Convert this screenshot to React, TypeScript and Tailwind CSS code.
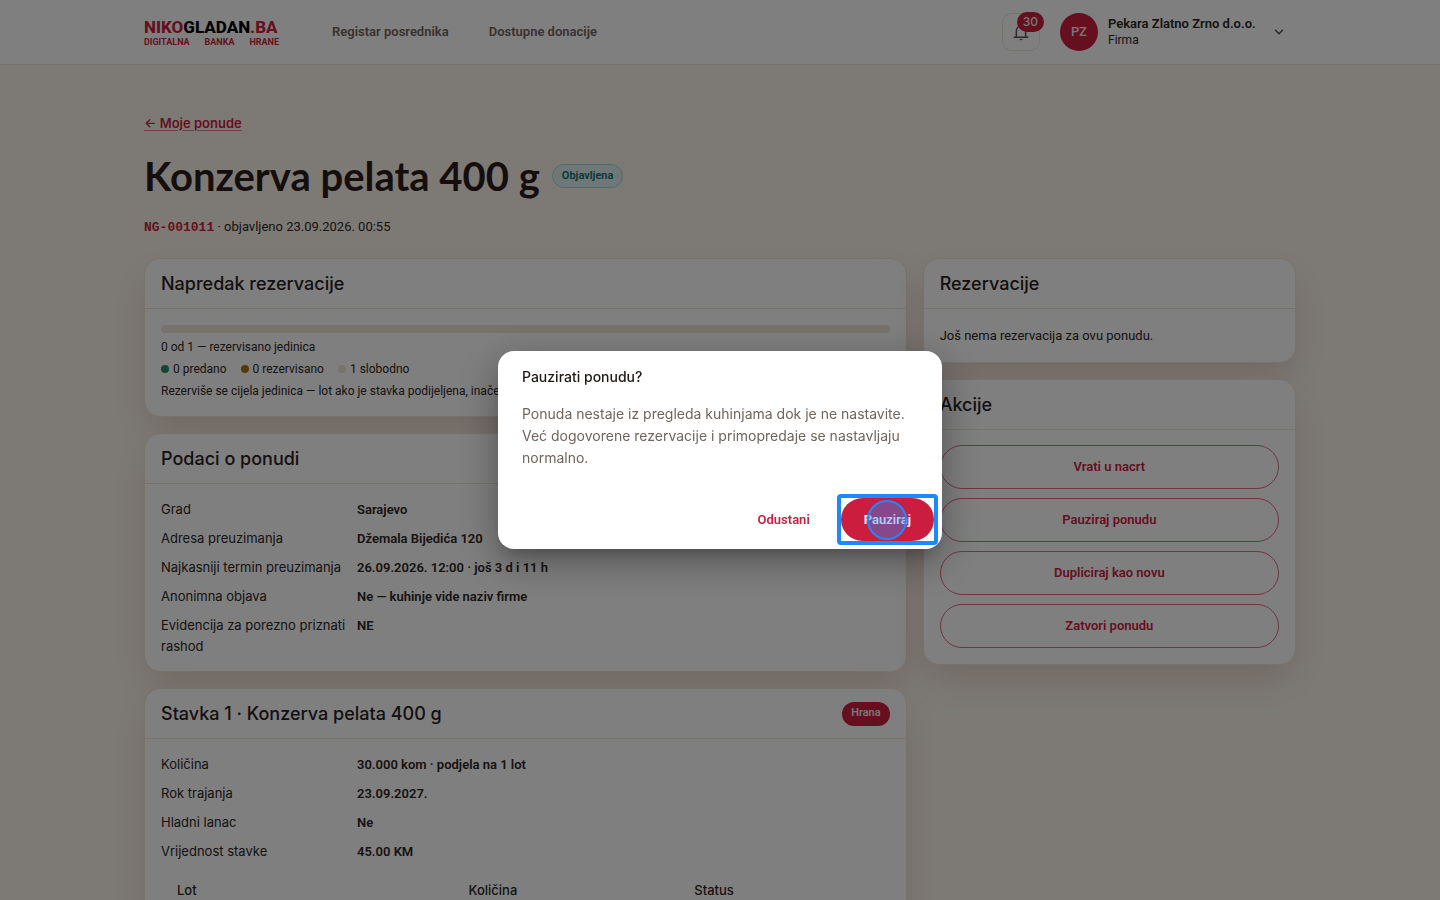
import type { ReactNode } from "react";
import { ChevronDown } from "lucide-react";

const SHADOW = "shadow-[0_16px_36px_-4px_rgba(140,70,50,0.22)]";

function Logo() {
  return (
    <a href="#" aria-label="Nikogladan.ba" className="flex w-[135px] flex-col font-[Roboto,sans-serif]">
      <span className="text-[17px] leading-[20px] font-extrabold text-black">
        <span className="text-[#cb1e3e]">NIKO</span>GLADAN<span className="text-[#cb1e3e]">.BA</span>
      </span>
      <span className="flex justify-between text-[9px] leading-[10px] font-bold text-[#cb1e3e]">
        <span>DIGITALNA</span>
        <span>BANKA</span>
        <span>HRANE</span>
      </span>
    </a>
  );
}

function BellIcon() {
  return (
    <svg width="18" height="18" viewBox="0 0 24 24" fill="none" stroke="currentColor" strokeWidth="2" className="text-[#5c524c]" aria-hidden="true">
      <path d="M3 19h18" strokeLinecap="round" />
      <path d="M5.8 19v-8.5a6.2 6.2 0 0 1 12.4 0V19" />
      <path d="M12 4V2.5" strokeLinecap="round" />
      <path d="M9.5 21.4h5l-2.5 2z" fill="currentColor" stroke="none" />
    </svg>
  );
}

function Card({ title, badge, children }: { title: string; badge?: ReactNode; children: ReactNode }) {
  return (
    <section className={`rounded-[16px] border border-[#efe4d6] bg-white ${SHADOW}`}>
      <header className="flex h-[50px] items-center justify-between border-b border-[#efe4d6] px-4">
        <h2 className="text-[18px] leading-6 font-medium text-[#2a211d]">{title}</h2>
        {badge}
      </header>
      <div className="px-4 pt-[15px] pb-[14px]">{children}</div>
    </section>
  );
}

function Details({ rows }: { rows: [string, string][] }) {
  return (
    <dl className="grid grid-cols-[192px_1fr] gap-x-1 gap-y-2 text-[13px] leading-[21px]">
      {rows.map(([label, value]) => (
        <div key={label} className="contents">
          <dt>{label}</dt>
          <dd className="font-[Roboto,sans-serif] font-semibold">{value}</dd>
        </div>
      ))}
    </dl>
  );
}

const legend = [
  { color: "bg-[#2a8a68]", label: "0 predano" },
  { color: "bg-[#a87400]", label: "0 rezervisano" },
  { color: "bg-[#efe4d6]", label: "1 slobodno" },
];

const actions = ["Vrati u nacrt", "Pauziraj ponudu", "Dupliciraj kao novu", "Zatvori ponudu"];

export default function App() {
  return (
    <div className="h-screen overflow-hidden bg-[#faf5ec] font-[Inter,'Liberation_Sans',sans-serif] text-[#2e2622]">
      <header className="border-b border-[#efe4d6] bg-white">
        <div className="mx-auto flex h-16 max-w-6xl items-center">
          <Logo />
          <nav className="ml-[53px] flex gap-10 font-[Roboto,sans-serif] text-[13px] font-semibold text-[#6f655e]">
            <a href="#">Registar posrednika</a>
            <a href="#">Dostupne donacije</a>
          </nav>
          <div className="ml-auto flex items-center pr-[10px]">
            <button type="button" aria-label="Obavijesti" className="relative flex size-[38px] items-center justify-center rounded-[10px] border border-[#efe4d6]">
              <BellIcon />
              <span className="absolute -top-[2px] -right-[5px] flex h-5 items-center rounded-full bg-[#cb1e3e] px-[6px] text-[12px] font-medium text-[#eee]">
                30
              </span>
            </button>
            <button type="button" className="ml-5 flex items-center text-left font-[Roboto,sans-serif]">
              <span className="flex size-[38px] items-center justify-center rounded-full bg-[#cb1e3e] text-[13px] font-medium text-[#eee]">PZ</span>
              <span className="ml-[10px] w-[152px] leading-4 whitespace-nowrap">
                <span className="block text-[13px] font-semibold">Pekara Zlatno Zrno d.o.o.</span>
                <span className="block text-[12px]">Firma</span>
              </span>
              <ChevronDown className="ml-3 size-[14px] text-[#5c524c]" strokeWidth={2.6} />
            </button>
          </div>
        </div>
      </header>

      <main className="mx-auto max-w-6xl pt-[50px]">
        <a href="#" className="block w-fit text-[13px] leading-4 font-semibold text-[#cb1e3e] underline decoration-[#e08093] decoration-1 underline-offset-2">
          ← Moje ponude
        </a>
        <div className="mt-[21px] flex items-center gap-3">
          <h1 className="font-[Lato,sans-serif] text-[40px] leading-[48px] font-bold text-[#2a1d18]">Konzerva pelata 400 g</h1>
          <span className="flex h-6 items-center rounded-full border border-[#a9d5d3] bg-[#dff0f0] px-[9px] font-[Roboto,sans-serif] text-[11px] font-semibold text-[#0e6f6d]">
            Objavljena
          </span>
        </div>
        <p className="mt-4 font-[Roboto,sans-serif] text-[13px] leading-[21px]">
          <span className="font-['Liberation_Mono',monospace] font-bold text-[#cb1e3e]">NG-001011</span> · objavljeno 23.09.2026. 00:55
        </p>

        <div className="mt-5 grid grid-cols-12 items-start gap-4">
          <div className="col-span-8 flex flex-col gap-4">
            <Card title="Napredak rezervacije">
              <div className="mt-px mb-[3px] h-2 rounded-full bg-[#efe4d6]" />
              <div className="font-[Roboto,sans-serif] text-[12px] leading-[22px]">
                <p>0 od 1 — rezervisano jedinica</p>
                <ul className="flex gap-[14px]">
                  {legend.map((item) => (
                    <li key={item.label} className="flex items-center gap-1">
                      <span className={`size-2 rounded-full ${item.color}`} />
                      {item.label}
                    </li>
                  ))}
                </ul>
                <p>Rezerviše se cijela jedinica — lot ako je stavka podijeljena, inače cijela stavka.</p>
              </div>
            </Card>

            <Card title="Podaci o ponudi">
              <Details
                rows={[
                  ["Grad", "Sarajevo"],
                  ["Adresa preuzimanja", "Džemala Bijedića 120"],
                  ["Najkasniji termin preuzimanja", "26.09.2026. 12:00 · još 3 d i 11 h"],
                  ["Anonimna objava", "Ne — kuhinje vide naziv firme"],
                  ["Evidencija za porezno priznati rashod", "NE"],
                ]}
              />
            </Card>

            <Card
              title="Stavka 1 · Konzerva pelata 400 g"
              badge={
                <span className="flex h-6 items-center rounded-full bg-[#cb1e3e] px-[9px] font-[Roboto,sans-serif] text-[11px] font-semibold text-[#eee]">
                  Hrana
                </span>
              }
            >
              <Details
                rows={[
                  ["Količina", "30.000 kom · podjela na 1 lot"],
                  ["Rok trajanja", "23.09.2027."],
                  ["Hladni lanac", "Ne"],
                  ["Vrijednost stavke", "45.00 KM"],
                ]}
              />
              <table className="mt-[18px] w-full table-fixed text-left text-[13px] leading-5">
                <thead>
                  <tr>
                    <th className="w-[40%] px-4 pb-3 font-medium">Lot</th>
                    <th className="w-[31%] px-4 pb-3 font-medium">Količina</th>
                    <th className="px-4 pb-3 font-medium">Status</th>
                  </tr>
                </thead>
              </table>
            </Card>
          </div>

          <div className="col-span-4 flex flex-col gap-4">
            <Card title="Rezervacije">
              <p className="font-[Roboto,sans-serif] text-[13px] leading-6">Još nema rezervacija za ovu ponudu.</p>
            </Card>
            <Card title="Akcije">
              <div className="flex flex-col gap-[9px] pb-[2px]">
                {actions.map((label) => (
                  <button
                    key={label}
                    type="button"
                    className="h-11 rounded-full border border-[#e06a80] font-[Roboto,sans-serif] text-[13px] font-semibold text-[#cb1e3e]"
                  >
                    {label}
                  </button>
                ))}
              </div>
            </Card>
          </div>
        </div>
      </main>

      <div className="fixed inset-0 flex items-center justify-center bg-black/50">
        <div
          role="dialog"
          aria-modal="true"
          aria-labelledby="pause-title"
          className="w-full max-w-[444px] rounded-[16px] bg-white shadow-[0_11px_15px_-7px_rgba(0,0,0,0.2),0_12px_38px_3px_rgba(0,0,0,0.3)]"
        >
          <div className="px-6 pt-4">
            <h2 id="pause-title" className="text-[14px] leading-5 font-medium text-[#1f1815]">
              Pauzirati ponudu?
            </h2>
            <p className="mt-4 text-[14px] leading-[22px] text-[#6f655e]">
              Ponuda nestaje iz pregleda kuhinjama dok je ne nastavite. Već dogovorene rezervacije i primopredaje se nastavljaju normalno.
            </p>
          </div>
          <div className="mt-[29px] flex justify-end gap-2 px-2 pb-2 font-[Roboto,sans-serif] text-[13px] font-semibold">
            <button type="button" className="h-[43px] rounded-full px-[23px] text-[#cb1e3e]">
              Odustani
            </button>
            <div className="relative">
              <button type="button" className="h-[43px] rounded-full bg-[#cb1e3e] px-[23px] text-white">
                Pauziraj
              </button>
              <span className="pointer-events-none absolute -inset-1 rounded-[4px] border-4 border-[#1e88ff]" />
              <span className="pointer-events-none absolute inset-0 m-auto size-10 rounded-full border-2 border-[#1e88ff] bg-[#1e88ff]/40" />
            </div>
          </div>
        </div>
      </div>
    </div>
  );
}
